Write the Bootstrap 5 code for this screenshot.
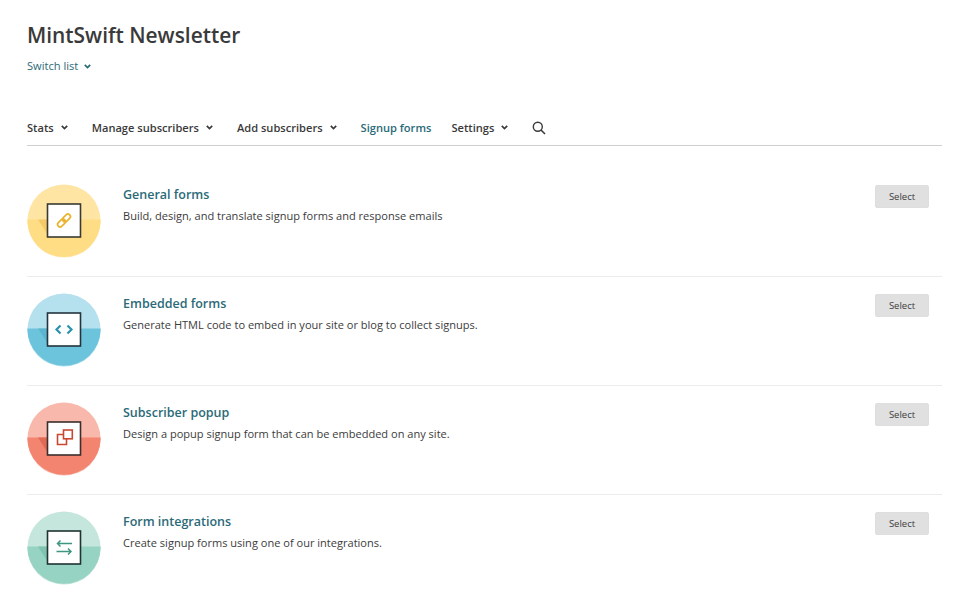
<!DOCTYPE html>
<html lang="en">
<head>
<meta charset="utf-8">
<title>MintSwift Newsletter</title>
<link href="https://cdn.jsdelivr.net/npm/bootstrap@5.3.0/dist/css/bootstrap.min.css" rel="stylesheet">
<style>
body{font-family:"Open Sans",sans-serif;color:#333;background:#fff;overflow:hidden;height:607px}
.page-wrap{padding:0 28px 0 27px}
.list-title{font-size:20.9px;font-weight:600;line-height:30px;margin:20px 0 0;color:#3a3a3a}
.switch-link{display:inline-flex;align-items:center;gap:6px;font-size:11.1px;line-height:16px;margin-top:8px;color:#2b6a78;text-decoration:none}
.main-nav{height:36px;margin-top:34px;border-bottom:1px solid #cfcfcf}
.main-nav a{font-size:11.1px;font-weight:600;color:#3a3a3a;text-decoration:none;display:inline-flex;align-items:center;gap:7px;line-height:16px}
.main-nav a.is-on{color:#2b6a78}
.main-nav a svg.chev{margin-right:4px}
.gap-nav{gap:20px}
.form-row{border-bottom:1px solid #ececec;display:flex;align-items:flex-start}
.form-row:first-child{padding-top:38px;height:131px}
.form-row:not(:first-child){padding-top:16px;height:109px}
.form-row:last-child{border-bottom:0}
.badge-art{width:74px;height:74px;flex:none;display:block}
.row-body{margin-left:22px;flex:1;padding-top:2px}
.row-title{font-size:12.5px;font-weight:600;line-height:18px;color:#2b6a78;margin:0 0 4px;text-decoration:none;display:block}
.row-text{font-size:11.06px;line-height:16px;color:#3c3c3c;margin:0}
.pick-btn{width:54px;height:23px;font-size:9.5px;line-height:21px;padding:0;background:#e0e0e0;border:1px solid #dedede;border-radius:2px;color:#3c3c3c;margin:1px 13px 0 0;flex:none}
</style>
</head>
<body>
<div class="page-wrap">
  <h1 class="list-title">MintSwift Newsletter</h1>
  <a class="switch-link" href="#">Switch list
    <svg width="7" height="5" viewBox="0 0 7 5"><path d="M.8 .9 3.500 3.600 6.200 .9" fill="none" stroke="#2b6a78" stroke-width="1.7"/></svg></a>
  <nav class="main-nav d-flex align-items-center gap-nav">
    <a href="#">Stats <svg class="chev" width="7" height="5" viewBox="0 0 7 5"><path d="M.8 .9 3.500 3.600 6.200 .9" fill="none" stroke="#3a3a3a" stroke-width="1.7"/></svg></a>
    <a href="#">Manage subscribers <svg class="chev" width="7" height="5" viewBox="0 0 7 5"><path d="M.8 .9 3.500 3.600 6.200 .9" fill="none" stroke="#3a3a3a" stroke-width="1.7"/></svg></a>
    <a href="#">Add subscribers <svg class="chev" width="7" height="5" viewBox="0 0 7 5"><path d="M.8 .9 3.500 3.600 6.200 .9" fill="none" stroke="#3a3a3a" stroke-width="1.7"/></svg></a>
    <a href="#" class="is-on">Signup forms</a>
    <a href="#">Settings <svg class="chev" width="7" height="5" viewBox="0 0 7 5"><path d="M.8 .9 3.500 3.600 6.200 .9" fill="none" stroke="#3a3a3a" stroke-width="1.7"/></svg></a>
    <a href="#" aria-label="Search"><svg width="14" height="14" viewBox="0 0 14 14"><circle cx="5.800" cy="5.800" r="4.500" fill="none" stroke="#3a3a3a" stroke-width="1.400"/><path d="M9 9 13 13" stroke="#3a3a3a" stroke-width="1.600"/></svg></a>
  </nav>
  <div>
    <div class="form-row">
      <svg class="badge-art" viewBox="0 0 74 74"><circle cx="37" cy="37" r="36.6" fill="#ffe5a3"/><path d="M.4 35.500A36.600 36.600 0 0 0 73.600 37c0-.5 0-1-.02-1.500z" fill="#ffdd85"/><path d="M11 35.500h9v14z" fill="#f5c969"/><rect x="20.500" y="20" width="33" height="33" fill="#fff" stroke="#3a3a32" stroke-width="1.6"/><g fill="none" stroke="#eab32e" stroke-width="1.700" transform="rotate(-45 37 36.500)"><rect x="29" y="34" width="9" height="5" rx="2.500"/><rect x="36" y="34" width="9" height="5" rx="2.500"/></g></svg>
      <div class="row-body"><a class="row-title" href="#">General forms</a><p class="row-text">Build, design, and translate signup forms and response emails</p></div>
      <button class="btn pick-btn">Select</button>
    </div>
    <div class="form-row">
      <svg class="badge-art" viewBox="0 0 74 74"><circle cx="37" cy="37" r="36.6" fill="#b5e0ed"/><path d="M.4 35.500A36.600 36.600 0 0 0 73.600 37c0-.5 0-1-.02-1.500z" fill="#6cc4dc"/><path d="M11 35.500h9v14z" fill="#5bb5cf"/><rect x="20.500" y="20" width="33" height="33" fill="#fff" stroke="#24343c" stroke-width="1.6"/><g fill="none" stroke="#2b93ae" stroke-width="2.200"><path d="M33.500 32.500 29.500 36.500 33.500 40.500"/><path d="M40.500 32.500 44.500 36.500 40.500 40.500"/></g></svg>
      <div class="row-body"><a class="row-title" href="#">Embedded forms</a><p class="row-text">Generate HTML code to embed in your site or blog to collect signups.</p></div>
      <button class="btn pick-btn">Select</button>
    </div>
    <div class="form-row">
      <svg class="badge-art" viewBox="0 0 74 74"><circle cx="37" cy="37" r="36.6" fill="#f8b8ab"/><path d="M.4 35.500A36.600 36.600 0 0 0 73.600 37c0-.5 0-1-.02-1.500z" fill="#f28470"/><path d="M11 35.500h9v14z" fill="#e06a54"/><rect x="20.500" y="20" width="33" height="33" fill="#fff" stroke="#3c2e2c" stroke-width="1.6"/><g fill="none" stroke="#c8492f" stroke-width="1.600"><rect x="36.500" y="28" width="8.800" height="8.800"/><path d="M36.500 32.500H30.500V42.500H39.500V36.800"/></g></svg>
      <div class="row-body"><a class="row-title" href="#">Subscriber popup</a><p class="row-text">Design a popup signup form that can be embedded on any site.</p></div>
      <button class="btn pick-btn">Select</button>
    </div>
    <div class="form-row">
      <svg class="badge-art" viewBox="0 0 74 74"><circle cx="37" cy="37" r="36.6" fill="#c5e6dd"/><path d="M.4 35.500A36.600 36.600 0 0 0 73.600 37c0-.5 0-1-.02-1.500z" fill="#96d3c2"/><path d="M11 35.500h9v14z" fill="#7fc3b0"/><rect x="20.500" y="20" width="33" height="33" fill="#fff" stroke="#1f3330" stroke-width="1.600"/><g fill="none" stroke="#3f9781" stroke-width="1.500"><path d="M30.500 32.500H45M33.500 29.500 30.500 32.500 33.500 35.500"/><path d="M29.500 40.500H44M41 37.500 44 40.500 41 43.500"/></g></svg>
      <div class="row-body"><a class="row-title" href="#">Form integrations</a><p class="row-text">Create signup forms using one of our integrations.</p></div>
      <button class="btn pick-btn">Select</button>
    </div>
  </div>
</div>
<script src="https://cdn.jsdelivr.net/npm/bootstrap@5.3.0/dist/js/bootstrap.bundle.min.js"></script>
</body>
</html>
